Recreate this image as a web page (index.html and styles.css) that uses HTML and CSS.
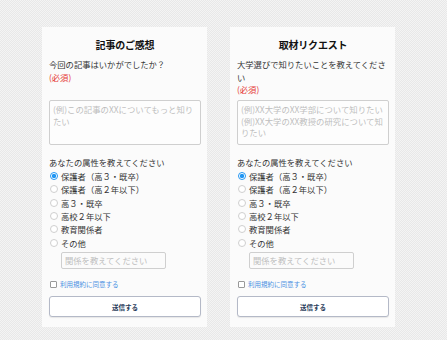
FILE: index.html
```html
<!DOCTYPE html>
<html lang="ja">
<head>
<meta charset="utf-8">
<link rel="stylesheet" href="styles.css">
</head>
<body>
<div class="page">
  <form class="card">
    <h2 class="title">記事のご感想</h2>
    <div class="question">
      <div>今回の記事はいかがでしたか？</div>
      <div class="req">(必須)</div>
    </div>
    <div class="textarea"><span class="ph">(例)この記事のXXについてもっと知りたい</span></div>
    <div class="label">あなたの属性を教えてください</div>
    <ul class="radios">
      <li><span class="radio on"></span>保護者（高３・既卒）</li>
      <li><span class="radio"></span>保護者（高２年以下）</li>
      <li><span class="radio"></span>高３・既卒</li>
      <li><span class="radio"></span>高校２年以下</li>
      <li><span class="radio"></span>教育関係者</li>
      <li><span class="radio"></span>その他</li>
    </ul>
    <div class="other"><span class="ph">関係を教えてください</span></div>
    <div class="agree"><span class="check"></span>利用規約に同意する</div>
    <div class="submit">送信する</div>
  </form>
  <form class="card">
    <h2 class="title">取材リクエスト</h2>
    <div class="question">
      <div>大学選びで知りたいことを教えてください</div>
      <div class="req">(必須)</div>
    </div>
    <div class="textarea"><span class="ph">(例)XX大学のXX学部について知りたい<br>(例)XX大学のXX教授の研究について知りたい</span></div>
    <div class="label">あなたの属性を教えてください</div>
    <ul class="radios">
      <li><span class="radio on"></span>保護者（高３・既卒）</li>
      <li><span class="radio"></span>保護者（高２年以下）</li>
      <li><span class="radio"></span>高３・既卒</li>
      <li><span class="radio"></span>高校２年以下</li>
      <li><span class="radio"></span>教育関係者</li>
      <li><span class="radio"></span>その他</li>
    </ul>
    <div class="other"><span class="ph">関係を教えてください</span></div>
    <div class="agree"><span class="check"></span>利用規約に同意する</div>
    <div class="submit">送信する</div>
  </form>
</div>
</body>
</html>
```

FILE: styles.css
```css
html, body {
  margin: 0;
  padding: 0;
}
body {
  width: 447px;
  height: 340px;
  overflow: hidden;
  background: repeating-conic-gradient(#e8e8e8 0 25%, #f4f4f4 0 50%) 0 0 / 2px 2px;
  font-family: "Noto Sans CJK JP", "Noto Sans", sans-serif;
  color: #333;
}
.page {
  display: flex;
  gap: 23px;
  padding: 27px 0 0 42px;
}
.card {
  width: 152px;
  height: 289px;
  background: #fbfbfb;
  padding: 11px 6px 0 7px;
  display: flex;
  flex-direction: column;
  margin: 0;
}
.title {
  margin: 0;
  font-size: 10px;
  line-height: 14px;
  font-weight: 700;
  text-align: center;
  color: #111;
  letter-spacing: -0.2px;
}
.question {
  margin-top: 6px;
  height: 42px;
  font-size: 8.3px;
  line-height: 12.5px;
}
.req {
  color: #e53935;
}
.textarea {
  box-sizing: border-box;
  height: 45px;
  border: 1px solid #cfcfcf;
  border-radius: 2px;
  padding: 3px 2px 3px 3px;
  font-size: 8.4px;
  line-height: 11.5px;
  background: #fdfdfd;
}
.ph {
  color: #bdbdbd;
}
.label {
  margin-top: 11px;
  font-size: 8.3px;
  line-height: 12.5px;
}
.radios {
  list-style: none;
  margin: 1px 0 0;
  padding: 0;
}
.radios li {
  display: flex;
  align-items: center;
  gap: 3px;
  height: 13.3px;
  font-size: 8.3px;
  padding-left: 1px;
}
.radio {
  box-sizing: border-box;
  width: 8px;
  height: 8px;
  border-radius: 50%;
  border: 1px solid #cfcfcf;
  background: #fff;
  flex: none;
}
.radio.on {
  border-color: #2196f3;
  background: radial-gradient(circle, #2196f3 0 2px, #fff 2.3px);
}
.other {
  box-sizing: border-box;
  margin: 3px 0 0 12px;
  width: 105px;
  height: 17px;
  border: 1px solid #cfcfcf;
  border-radius: 2px;
  padding: 0 3px;
  font-size: 8.3px;
  line-height: 15px;
}
.agree {
  margin-top: 10px;
  display: flex;
  align-items: center;
  gap: 3px;
  height: 10px;
  font-size: 6.5px;
  color: #4a90e2;
  padding-left: 1px;
}
.check {
  box-sizing: border-box;
  width: 7px;
  height: 7px;
  border: 1px solid #999;
  border-radius: 1px;
  background: #fff;
  flex: none;
}
.submit {
  box-sizing: border-box;
  margin-top: 7px;
  height: 21px;
  border: 1px solid #b4b9c7;
  border-radius: 3px;
  box-shadow: 0 1px 1px rgba(0,0,0,0.08);
  display: flex;
  align-items: center;
  justify-content: center;
  font-size: 6.5px;
  font-weight: 700;
  color: #2c3e5c;
  background: #fff;
}
```
